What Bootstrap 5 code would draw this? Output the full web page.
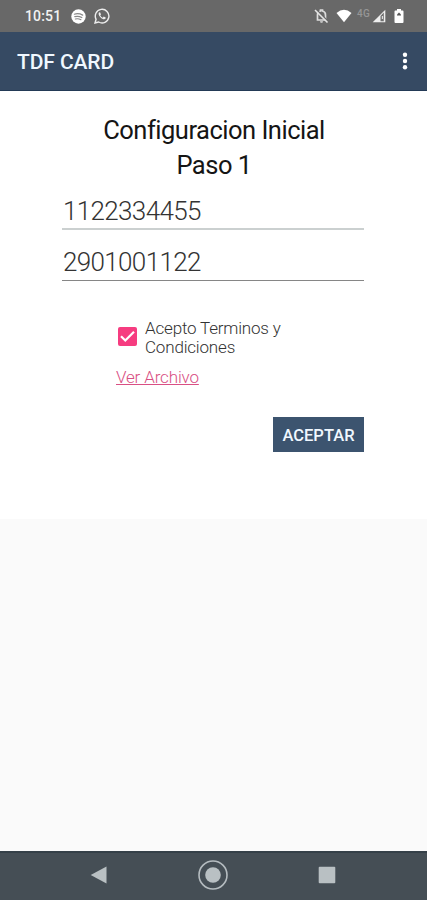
<!DOCTYPE html>
<html lang="es">
<head>
<meta charset="utf-8">
<meta name="viewport" content="width=device-width, initial-scale=1">
<title>TDF CARD</title>
<link rel="stylesheet" href="https://cdn.jsdelivr.net/npm/bootstrap@5.3.0/dist/css/bootstrap.min.css">
<style>
body{font-family:Roboto,"Liberation Sans",sans-serif;background:#fafafa;color:#111;height:900px;overflow:hidden}
svg{display:block;flex:none}
.status-bar{height:32px;background:#686868;color:#f2f2f2;padding:0 22px 0 25px}
.clock{font-size:14px;font-weight:500;line-height:33px;width:46px;letter-spacing:.15px}
.wifi-icon{margin-left:7px}
.battery-icon{margin:0 1px 0 8px}
.net-label{font-size:10px;line-height:10px;color:#969696;font-weight:500;width:14px;margin:-5px 1px 0 5px;letter-spacing:.4px}
.app-bar{height:59px;background:#364a63;border-bottom:1px solid #233a56;padding:0 19px 0 17px}
.app-title{font-size:21px;font-weight:500;color:#f0f8ff;line-height:58px;letter-spacing:-.1px;padding-top:2px}
.panel{height:428px;background:#fff;padding:22px 63px 0 62px}
.step-title{font-size:25.5px;line-height:35px;font-weight:400;color:#151515;margin:0;letter-spacing:-.5px;padding-left:2px}
.line-input{height:51px;border:0;border-bottom:1px solid #868686;border-radius:0;background:none;padding:13px 1px 0;font-size:26px;font-weight:300;letter-spacing:-.65px;color:#333;line-height:30px}
.line-input:focus{box-shadow:none}
.line-first{height:40px;border-bottom:2px solid #cbd0d0;padding-top:3px;margin-top:7px}
.terms{margin:38px 0 0 56px}
.terms-box{grid-area:1/1;width:19px;height:19px;margin:-3px 0 0;border:0}
.terms-box.form-check-input[type=checkbox]{border-radius:2px}
.terms-box:checked{background-color:#f63c80}
.terms-box:checked[type=checkbox]{background-image:none}
.tick{grid-area:1/1;margin-top:-3px;pointer-events:none}
.terms-text{font-size:17px;line-height:19px;font-weight:300;color:#333;width:150px;letter-spacing:-.18px}
.file-link{font-size:17px;line-height:20px;font-weight:300;color:#d94f84;margin:10px 0 0 54px;letter-spacing:-.15px}
.btn-accept{width:91px;height:35px;background:#3c546f;color:#f0f8ff;font-size:16.5px;font-weight:500;line-height:37px;border:0;border-radius:0;margin-top:30px}
.nav-keys{height:49px;background:#454e55;border-top:2px solid #354048;padding:0 91px 3px 90px}
</style>
</head>
<body class="d-flex flex-column">
<div class="status-bar d-flex align-items-center">
  <span class="clock">10:51</span>
  <svg width="15" height="15" viewBox="0 0 15 15"><circle cx="7.5" cy="7.5" r="7.2" fill="#fff"/><path d="M3.3 5.2q4.3-1.3 8.4.9M3.8 7.7q3.7-1 7 .8M4.4 10q3-.7 5.5.7" fill="none" stroke="#888" stroke-width="1.2" stroke-linecap="round"/></svg>
  <svg class="ms-2" width="16" height="16" viewBox="0 0 16 16"><path d="M1 15l1.1-3.7A6.8 6.8 0 1 1 4.700 14z" fill="none" stroke="#eee" stroke-width="1.4"/><path d="M5.400 4.200c-1.400.8-1 3 1 5s4.100 2.900 5.200 1.300l.1-.9-2-1-1 1.100C7.500 9.200 6.700 8.400 6.200 7.300l.8-.9-.8-2z" fill="#eee"/></svg>
  <svg class="ms-auto" width="15" height="16" viewBox="0 0 15 16"><path d="M3.500 12V7a4 4 0 0 1 3-4V2h2v1a4 4 0 0 1 3 4v5z" fill="none" stroke="#ddd" stroke-width="1.700"/><path d="M6 13.300h3a1.500 1.500 0 0 1-3 0z" fill="#ddd"/><path d="M2.300 1.500l12.500 12.500" stroke="#686868" stroke-width="1.500"/><path d="M1 2l12.500 12.500" stroke="#e5e5e5" stroke-width="1.600"/></svg>
  <svg class="wifi-icon" width="16" height="14" viewBox="0 0 16 14"><path d="M.5 4Q8-2.600 15.500 4L8 13.300z" fill="#fff"/></svg>
  <span class="net-label">4G</span>
  <svg width="14" height="14" viewBox="0 0 14 14"><path d="M13.300.7V13.300H.7z" fill="#eee"/><path d="M8.500 7l3.300-3.500v8.800H8.500z" fill="#707070"/><path d="M9.800 7h1.200v3h-1.200z" fill="#ddd"/></svg>
  <svg class="battery-icon" width="10" height="14" viewBox="0 0 10 14"><path d="M3 0h4v1.500h1.600q.9 0 .9.900v10.700q0 .9-.9.900H1.400q-.9 0-.9-.9V2.400q0-.9.9-.9H3z" fill="#fff"/><path d="M3 5.500l2-2 2 2v1H3z" fill="#555"/></svg>
</div>
<nav class="app-bar d-flex align-items-center justify-content-between">
  <span class="app-title">TDF CARD</span>
  <svg width="6" height="18" viewBox="0 0 6 18" fill="#fff"><circle cx="3" cy="2.700" r="2.200"/><circle cx="3" cy="9" r="2.200"/><circle cx="3" cy="15.300" r="2.200"/></svg>
</nav>
<main class="panel d-flex flex-column">
  <h1 class="step-title text-center">Configuracion Inicial<br>Paso 1</h1>
  <input class="form-control line-input line-first" type="text" value="1122334455" aria-label="Documento">
  <input class="form-control line-input" type="text" value="2901001122" aria-label="Celular">
  <div class="terms d-flex align-items-center">
    <div class="d-grid">
      <input class="form-check-input terms-box" type="checkbox" id="terms" checked>
      <svg class="tick" width="19" height="19" viewBox="0 0 19 19"><path d="M3 9.200l4.300 4.300L16 4.800" fill="none" stroke="#fff" stroke-width="2.200"/></svg>
    </div>
    <label class="terms-text ms-2" for="terms">Acepto Terminos y Condiciones</label>
  </div>
  <a class="file-link align-self-start" href="#">Ver Archivo</a>
  <button class="btn btn-accept align-self-end p-0" type="button">ACEPTAR</button>
</main>
<footer class="nav-keys mt-auto d-flex align-items-center justify-content-between">
  <svg width="18" height="18" viewBox="0 0 18 18"><path d="M16.500.5v17L.7 9z" fill="#b9c0c3"/></svg>
  <svg width="30" height="30" viewBox="0 0 30 30"><circle cx="15" cy="15" r="14" fill="none" stroke="#b5bcc0" stroke-width="1.600"/><circle cx="15" cy="15" r="7.800" fill="#b9c0c3"/></svg>
  <svg width="18" height="18" viewBox="0 0 18 18"><rect x=".7" y=".7" width="16.600" height="16.600" rx="1" fill="#b9c0c3"/></svg>
</footer>
<script src="https://cdn.jsdelivr.net/npm/bootstrap@5.3.0/dist/js/bootstrap.bundle.min.js"></script>
</body>
</html>
